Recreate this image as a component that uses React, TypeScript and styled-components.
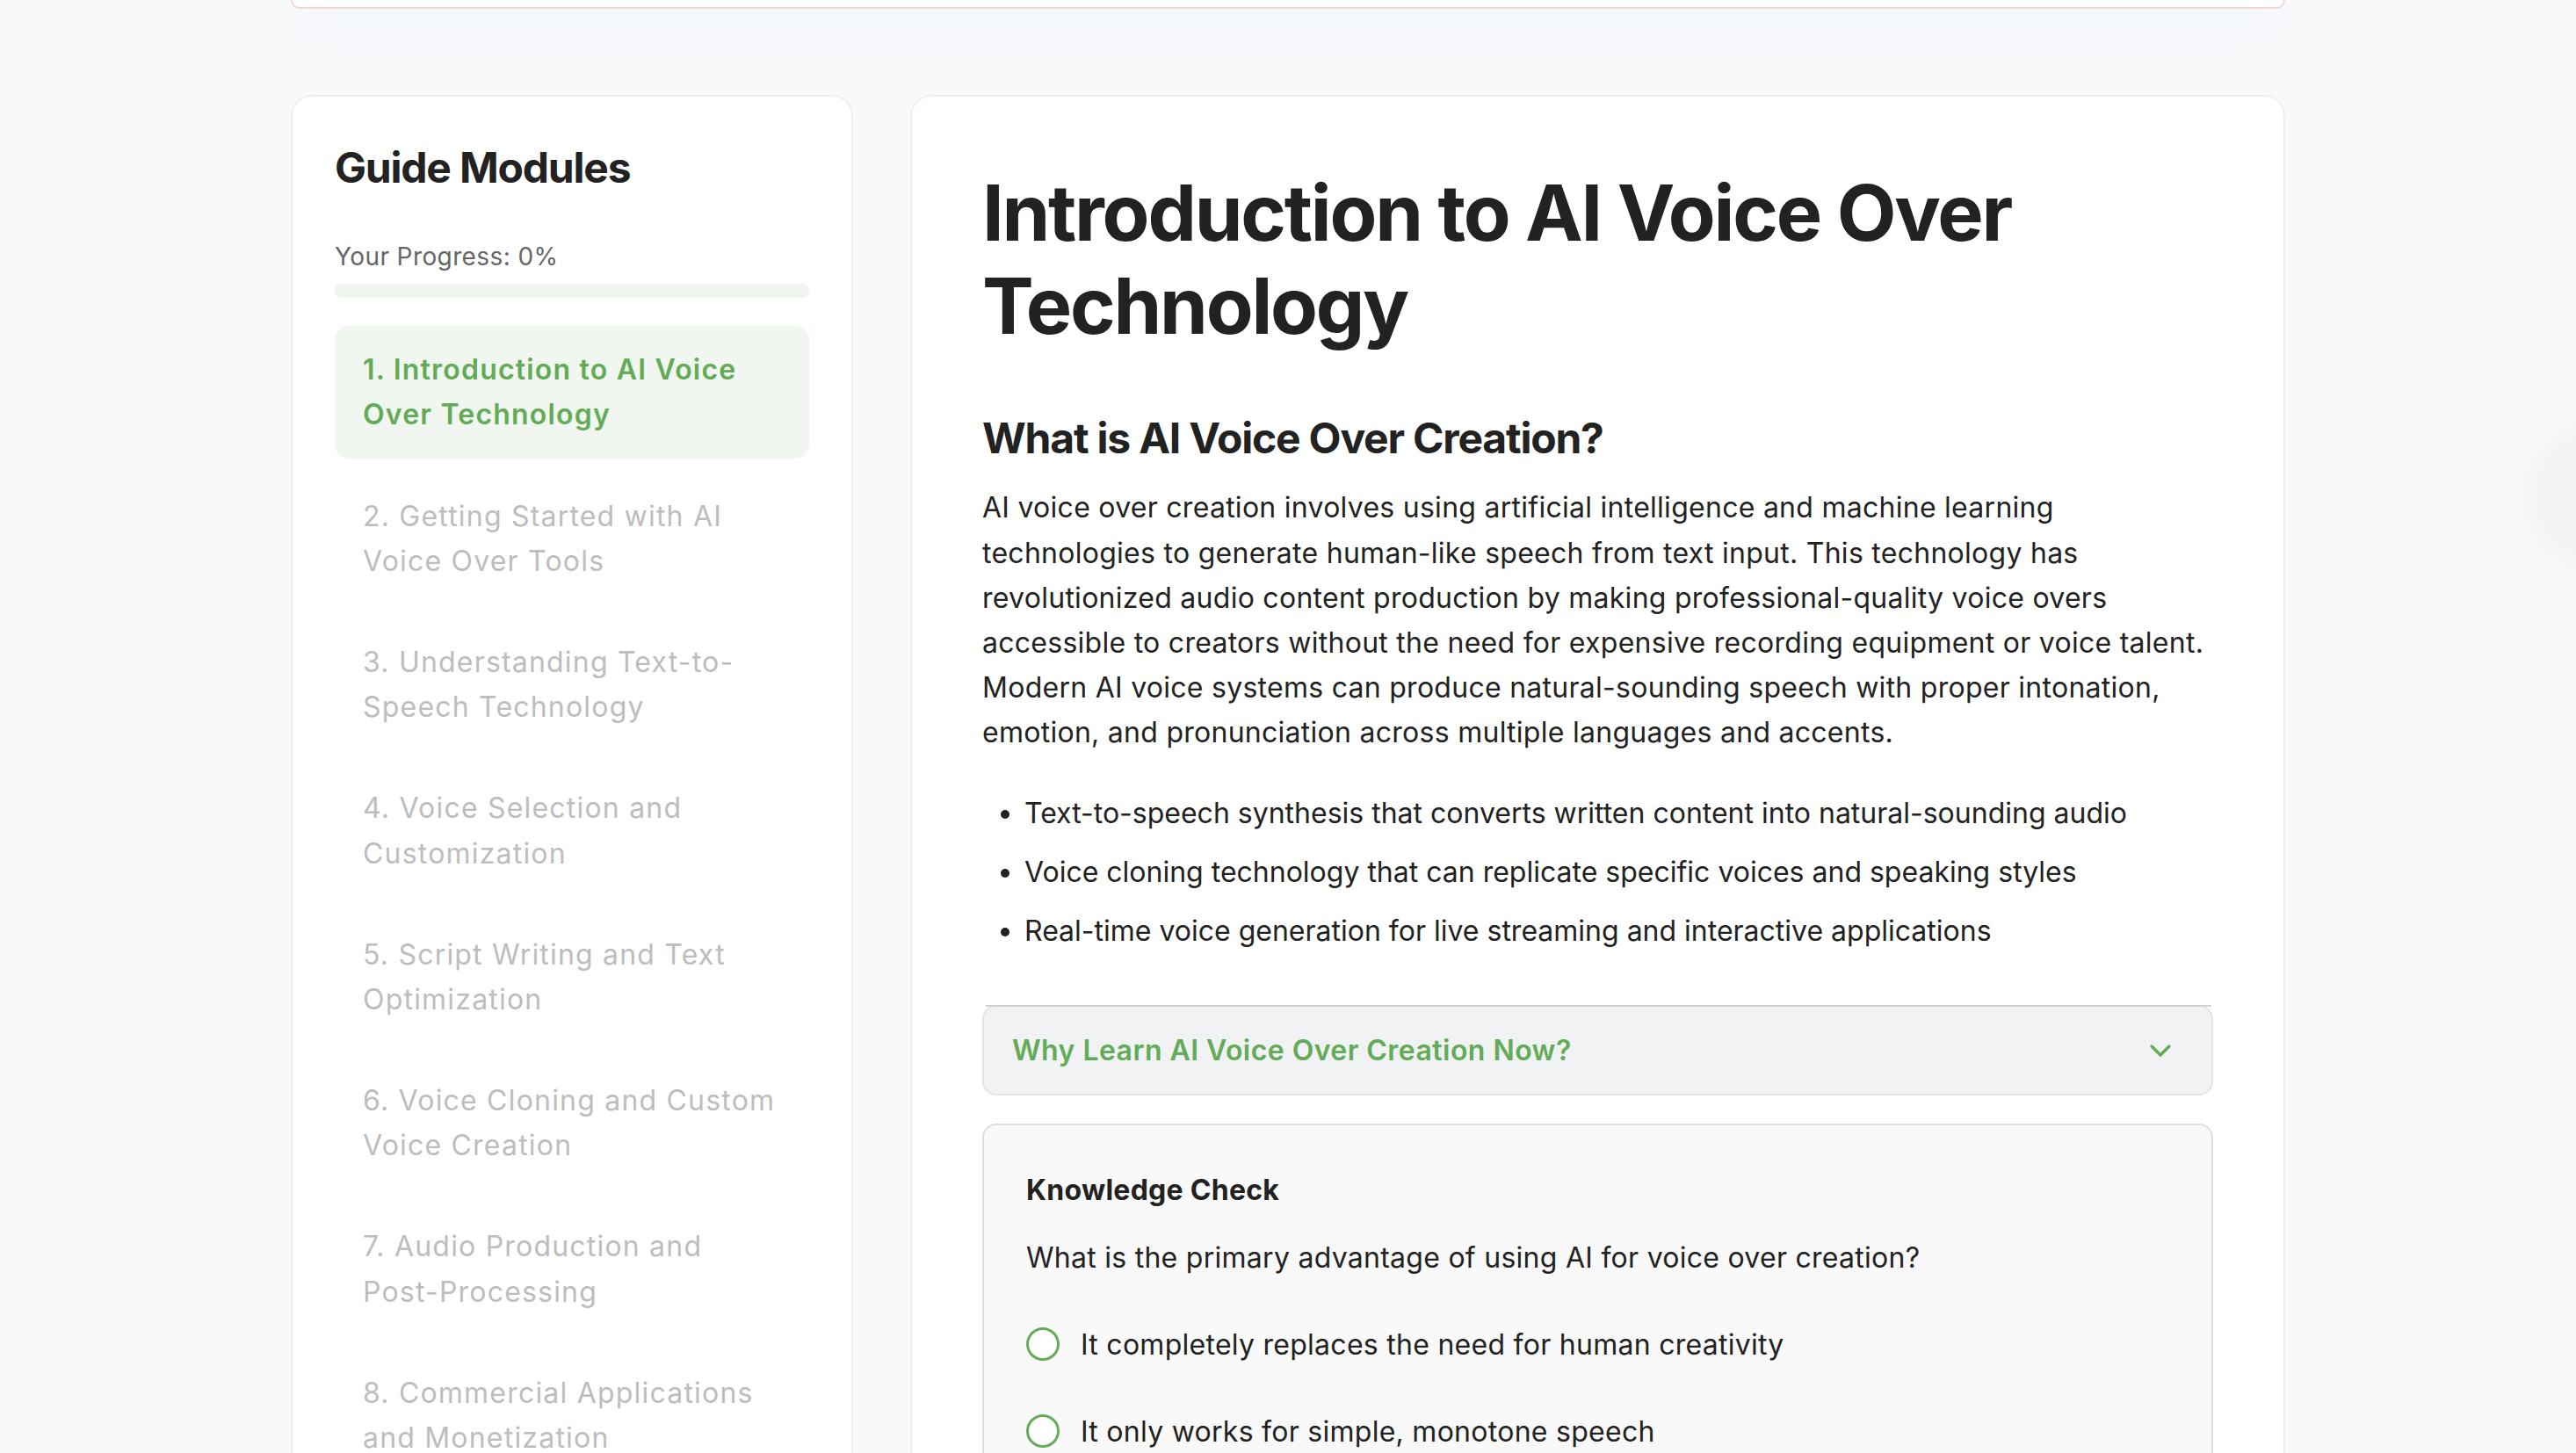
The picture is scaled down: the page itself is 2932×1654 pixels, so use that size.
import React, { FC } from 'react';
import styled, { createGlobalStyle } from 'styled-components';
import { ChevronDown } from 'lucide-react';

const GlobalStyle = createGlobalStyle`
  html, body {
    margin: 0;
    padding: 0;
    overflow: hidden;
    background: #f7f9fb;
    font-family: "Inter", "Noto Sans", sans-serif;
    color: #222;
  }
  * {
    box-sizing: border-box;
  }
`;

const modules: string[] = [
    'Introduction to AI Voice Over Technology',
    'Getting Started with AI Voice Over Tools',
    'Understanding Text-to-Speech Technology',
    'Voice Selection and Customization',
    'Script Writing and Text Optimization',
    'Voice Cloning and Custom Voice Creation',
    'Audio Production and Post-Processing',
    'Commercial Applications and Monetization'
];

const bullets: string[] = [
    'Text-to-speech synthesis that converts written content into natural-sounding audio',
    'Voice cloning technology that can replicate specific voices and speaking styles',
    'Real-time voice generation for live streaming and interactive applications'
];

const options: string[] = [
    'It completely replaces the need for human creativity',
    'It only works for simple, monotone speech',
    'It makes professional-quality voice overs accessible and affordable'
];

const progress = 0;

const App: FC = () => {
    return (
        <>
            <GlobalStyle />
            <Page>
                <Container>
                    <HeroCard />
                    <Layout>
                        <Sidebar>
                            <SidebarTitle>Guide Modules</SidebarTitle>
                            <ProgressLabel>Your Progress: {progress}%</ProgressLabel>
                            <ProgressTrack>
                                <ProgressFill style={{ width: `${progress}%` }} />
                            </ProgressTrack>
                            <ModuleList>
                                {modules.map((m, i) => (
                                    <ModuleItem key={m} $active={i === 0}>
                                        {i + 1}. {m}
                                    </ModuleItem>
                                ))}
                            </ModuleList>
                        </Sidebar>

                        <Main>
                            <Title>Introduction to AI Voice Over Technology</Title>
                            <SectionHeading>What is AI Voice Over Creation?</SectionHeading>
                            <Paragraph>
                                AI voice over creation involves using artificial intelligence and machine learning
                                technologies to generate human-like speech from text input. This technology has
                                revolutionized audio content production by making professional-quality voice overs
                                accessible to creators without the need for expensive recording equipment or voice talent.
                                Modern AI voice systems can produce natural-sounding speech with proper intonation,
                                emotion, and pronunciation across multiple languages and accents.
                            </Paragraph>
                            <BulletList>
                                {bullets.map(b => (
                                    <li key={b}>{b}</li>
                                ))}
                            </BulletList>

                            <Accordion>
                                <AccordionHeader>
                                    <span>Why Learn AI Voice Over Creation Now?</span>
                                    <ChevronIcon size={40} strokeWidth={2} color="#62ab57" />
                                </AccordionHeader>
                            </Accordion>

                            <QuizCard>
                                <QuizTitle>Knowledge Check</QuizTitle>
                                <Question>What is the primary advantage of using AI for voice over creation?</Question>
                                {options.map(o => (
                                    <Option key={o}>
                                        <Radio />
                                        <span>{o}</span>
                                    </Option>
                                ))}
                            </QuizCard>
                        </Main>
                    </Layout>
                </Container>
                <FloatingBubble />
            </Page>
        </>
    );
};

export default App;

// Styled Components
const Page = styled.div`
  min-height: 100vh;
  background: #f7f9fb;
`;

const Container = styled.div`
  width: 2270px;
  margin: 0 auto;
`;

const HeroCard = styled.div`
  height: 10px;
  background: #fff;
  border: 2px solid #f3d5d8;
  border-top: none;
  border-radius: 0 0 26px 26px;
  box-shadow: 0 12px 60px rgba(70, 110, 220, 0.07);
`;

const Layout = styled.div`
  display: grid;
  grid-template-columns: 640px 1fr;
  gap: 65px;
  align-items: start;
  margin-top: 98px;
`;

const Sidebar = styled.aside`
  background: #fff;
  border: 2px solid #eeeeee;
  border-radius: 24px;
  padding: 50px 48px 48px;
`;

const SidebarTitle = styled.h2`
  margin: 0 0 48px;
  font-size: 48px;
  line-height: 1.3;
  font-weight: 700;
  letter-spacing: -1.2px;
  color: #222;
`;

const ProgressLabel = styled.div`
  font-size: 28px;
  line-height: 1.6;
  letter-spacing: 0.4px;
  color: #666;
  margin-bottom: 8px;
`;

const ProgressTrack = styled.div`
  height: 16px;
  border-radius: 8px;
  background: #eef5ec;
  overflow: hidden;
  margin-bottom: 32px;
`;

const ProgressFill = styled.div`
  height: 100%;
  background: #62ab57;
`;

const ModuleList = styled.div`
  display: flex;
  flex-direction: column;
  gap: 16px;
`;

const ModuleItem = styled.div<{ $active?: boolean }>`
  padding: 24px 32px;
  border-radius: 16px;
  font-size: 32px;
  line-height: 1.6;
  letter-spacing: 1.2px;
  font-weight: ${p => (p.$active ? 600 : 400)};
  color: ${p => (p.$active ? '#62ab57' : '#bdbdbd')};
  background: ${p => (p.$active ? '#f1f7f0' : 'transparent')};
  cursor: pointer;
`;

const Main = styled.main`
  background: #fff;
  border: 2px solid #eeeeee;
  border-radius: 24px;
  padding: 80px;
  min-height: 1800px;
`;

const Title = styled.h1`
  margin: 0 0 64px;
  font-size: 88px;
  line-height: 1.2;
  font-weight: 700;
  letter-spacing: -2.2px;
  color: #222;
`;

const SectionHeading = styled.h2`
  margin: 0 0 20px;
  font-size: 48px;
  line-height: 1.4;
  font-weight: 700;
  letter-spacing: -1.2px;
  color: #222;
`;

const Paragraph = styled.p`
  margin: 0 0 40px;
  font-size: 32px;
  line-height: 1.6;
  letter-spacing: 0.27px;
  color: #222;
`;

const BulletList = styled.ul`
  margin: 0 0 59px;
  padding-left: 48px;
  font-size: 32px;
  line-height: 1.6;
  color: #222;

  li {
    margin-bottom: 16px;
  }
`;

const Accordion = styled.div`
  position: relative;
  margin-bottom: 32px;

  &::before {
    content: '';
    position: absolute;
    top: 0;
    left: 4px;
    right: 2px;
    height: 2px;
    background: #cfd0d3;
  }
`;

const AccordionHeader = styled.div`
  display: flex;
  align-items: center;
  justify-content: space-between;
  padding: 24px 32px;
  background: #f1f2f4;
  border: 2px solid #e3e4e6;
  border-radius: 16px;
  font-size: 32px;
  line-height: 1.6;
  font-weight: 600;
  letter-spacing: 0.45px;
  color: #62ab57;
  cursor: pointer;
`;

const ChevronIcon = styled(ChevronDown)`
  flex: none;
  margin-right: 6px;
`;

const QuizCard = styled.div`
  background: #f9f9f9;
  border: 2px solid #dedede;
  border-radius: 16px;
  padding: 48px;
  letter-spacing: 0.27px;
`;

const QuizTitle = styled.h3`
  margin: 0 0 26px;
  font-size: 32px;
  line-height: 1.6;
  font-weight: 700;
  color: #222;
`;

const Question = styled.p`
  margin: 0 0 23px;
  font-size: 32px;
  line-height: 1.6;
  color: #222;
`;

const Option = styled.label`
  display: flex;
  align-items: center;
  gap: 24px;
  padding: 24px 0;
  font-size: 32px;
  line-height: 1.6;
  color: #222;
  cursor: pointer;
`;

const Radio = styled.span`
  flex: none;
  width: 38px;
  height: 38px;
  border-radius: 50%;
  border: 3px solid #66ad5a;
  background: #fff;
`;

const FloatingBubble = styled.div`
  position: fixed;
  right: -90px;
  top: 500px;
  width: 130px;
  height: 130px;
  border-radius: 50%;
  background: #f3f4f6;
  box-shadow: 0 0 70px rgba(0, 0, 0, 0.06);
`;
